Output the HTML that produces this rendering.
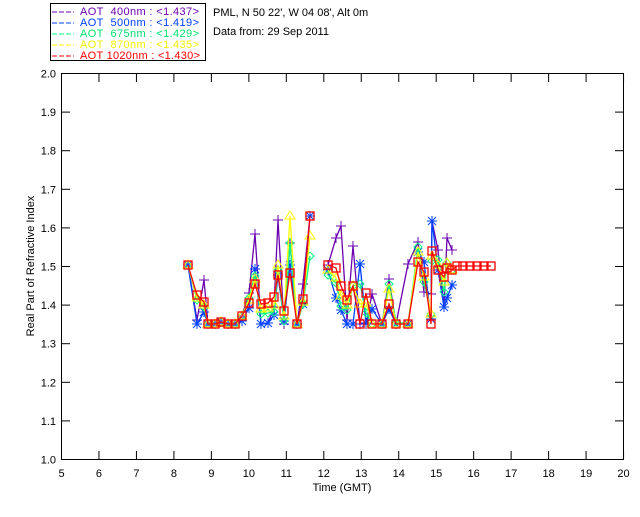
<!DOCTYPE html>
<html><head><style>
body{margin:0;background:#fff;width:640px;height:512px;overflow:hidden}
svg text{font-family:"Liberation Sans",sans-serif;font-size:11px;white-space:pre}
</style></head><body>
<svg id="s" width="640" height="512" xmlns="http://www.w3.org/2000/svg">
<rect x="50.5" y="3.5" width="155" height="57" fill="none" stroke="#000"/>
<g font-size="11">
<line x1="52" y1="12" x2="74" y2="12" stroke="#6a00b0" stroke-dasharray="5,2"/><text x="80" y="15" fill="#6a00b0" textLength="119">AOT  400nm : &lt;1.437&gt;</text>
<line x1="52" y1="23" x2="74" y2="23" stroke="#0040ff" stroke-dasharray="5,2"/><text x="80" y="26" fill="#0040ff" textLength="119">AOT  500nm : &lt;1.419&gt;</text>
<line x1="52" y1="34" x2="74" y2="34" stroke="#00ff80" stroke-dasharray="5,2"/><text x="80" y="37" fill="#00e070" textLength="119">AOT  675nm : &lt;1.429&gt;</text>
<line x1="52" y1="45" x2="74" y2="45" stroke="#ffff00" stroke-dasharray="5,2"/><text x="80" y="48" fill="#f0f000" textLength="119">AOT  870nm : &lt;1.435&gt;</text>
<line x1="52" y1="56" x2="74" y2="56" stroke="#ff0000" stroke-dasharray="5,2"/><text x="80" y="59" fill="#ff0000" textLength="120">AOT 1020nm : &lt;1.430&gt;</text>
</g>
<text x="213" y="16">PML, N 50 22', W 04 08', Alt 0m</text>
<text x="213" y="35">Data from: 29 Sep 2011</text>
<rect x="61.5" y="73.5" width="562" height="386" fill="none" stroke="#000"/>
<text x="342" y="491" text-anchor="middle">Time (GMT)</text>
<text transform="translate(34,266) rotate(-90)" text-anchor="middle">Real Part of Refractive Index</text>
<g id="ax"></g>
<g id="d"></g>
</svg>
<script>
var ns="http://www.w3.org/2000/svg",ax=document.getElementById('ax'),d=document.getElementById('d');
function el(p,t,a){var e=document.createElementNS(ns,t);for(var k in a)e.setAttribute(k,a[k]);p.appendChild(e);return e;}
for(var n=5;n<=20;n++){var x=61.5+37.47*(n-5);
el(ax,'line',{x1:x,y1:459,x2:x,y2:451,stroke:'#000'});el(ax,'line',{x1:x,y1:74,x2:x,y2:82,stroke:'#000'});
var t=el(ax,'text',{x:x,y:477,'text-anchor':'middle'});t.textContent=n;}
for(var i=0;i<=10;i++){var y=459.5-38.6*i;
el(ax,'line',{x1:62,y1:y,x2:70,y2:y,stroke:'#000'});el(ax,'line',{x1:623,y1:y,x2:615,y2:y,stroke:'#000'});
var t=el(ax,'text',{x:56,y:y+4,'text-anchor':'end'});t.textContent=(1+i/10).toFixed(1);}
var red=[[188,265],[197,295],[204,302],[208,324],[215,324],[221,322],[228,324],[235,324],[242,316],[249,303],[255,284],[261,304],[268,303],[274,297],[278,275],[284,311],[290,273],[297,324],[303,299],[310,216],null,[328,265],[336,268],[341,286],[347,300],[353,286],[360,324],[366,293],[372,324],[382,324],[389,304],[396,324],[408,324],[418,262],[424,272],[431,324],[432,251],[438,270],[444,277],[447,268],[452,270],[457,266],[463,266],[470,266],[477,266],[484,266],[491,266]];
function mk(off,col,shape){var s=red.slice(0,red.length-6).map(function(p,i){return p?[p[0],Math.max(216,Math.min(324,p[1]+off[i%off.length]))]:null});
var seg=[],segs=[seg];s.forEach(function(p){if(!p){seg=[];segs.push(seg)}else seg.push(p)});
segs.forEach(function(sg){el(d,'polyline',{points:sg.map(function(p){return p.join(',')}).join(' '),fill:'none',stroke:col,'stroke-width':1.3});});
s.forEach(function(p){if(!p)return;var x=p[0],y=p[1];
if(shape=='+'){el(d,'path',{d:'M'+(x-5)+' '+y+'h10M'+x+' '+(y-5)+'v10',stroke:col,fill:'none'});}
else if(shape=='*'){el(d,'path',{d:'M'+(x-5)+' '+y+'h10M'+x+' '+(y-5)+'v10M'+(x-4)+' '+(y-4)+'l8 8M'+(x-4)+' '+(y+4)+'l8 -8',stroke:col,fill:'none'});}
else if(shape=='d'){el(d,'path',{d:'M'+x+' '+(y-4)+'l4 4l-4 4l-4 -4z',stroke:col,fill:'none'});}
else if(shape=='t'){el(d,'path',{d:'M'+x+' '+(y-5)+'l5 8h-10z',stroke:col,fill:'none'});}
});}
mk([0,25,-22,0,0,0,0,0,0,-10,-50,20,20,10,-55,20,-30,0,-15,-50,0,0,-30,-60,20,-40,0,50,-30,20,-25,30,-60,-20,20,-30,-30,-20,30,-30,-20],'#6a00b0','+');
mk([0,30,10,0,0,0,0,0,5,5,-15,20,20,18,0,10,-8,0,5,0,0,5,30,24,24,38,-60,30,-15,0,5,5,0,-10,-10,-5,-30,0,30,30,15,-30],'#0040ff','*');
mk([0,5,5,0,0,0,0,0,0,-5,-8,10,10,15,-5,10,-30,0,5,40,0,10,15,20,10,0,-40,20,0,0,-20,-2,0,-15,10,-10,10,-10,15,-5,0,-18],'#00ff80','d');
mk([0,3,3,0,0,0,0,0,0,-3,-5,5,5,8,-10,5,-60,0,3,20,0,5,10,10,5,0,-20,10,0,0,-15,0,0,-10,5,-10,5,-5,5,-5,0,-10],'#ffff00','t');
var segs=[red.slice(0,20),red.slice(21)];
segs.forEach(function(sg){el(d,'polyline',{points:sg.map(function(p){return p.join(',')}).join(' '),fill:'none',stroke:'#ff0000','stroke-width':1.3});});
red.forEach(function(p){if(p)el(d,'rect',{x:p[0]-4,y:p[1]-4,width:8,height:8,fill:'none',stroke:'#ff0000','stroke-width':1.3});});
</script>
</body></html>
